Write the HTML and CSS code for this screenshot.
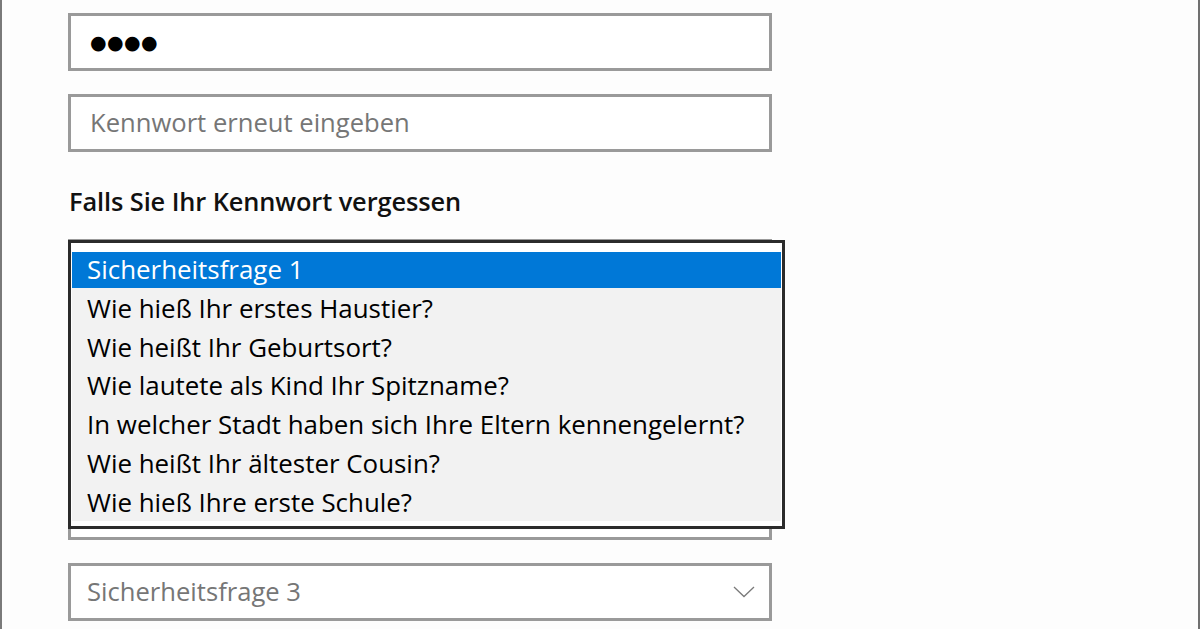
FILE: index.html
```html
<!DOCTYPE html>
<html lang="de">
<head>
<meta charset="utf-8">
<title>Kennwort</title>
<link rel="stylesheet" href="styles.css">
</head>
<body>
<div class="window">
  <div class="form">
    <div class="field"><span class="dots">●●●●</span></div>
    <div class="field gap"><span class="placeholder">Kennwort erneut eingeben</span></div>
    <div class="heading">Falls Sie Ihr Kennwort vergessen</div>
    <div class="field select first"></div>
    <div class="field gap"></div>
    <div class="field select gap"></div>
    <div class="field gap"></div>
    <div class="field select gap">
      <span class="placeholder">Sicherheitsfrage 3</span>
      <svg class="chevron" width="22" height="12" viewBox="0 0 22 12"><polyline points="1,1 11,10.5 21,1" fill="none" stroke="#7a7a7a" stroke-width="1.3"/></svg>
    </div>
    <div class="popup">
      <ul class="list">
        <li class="item selected">Sicherheitsfrage 1</li>
        <li class="item">Wie hieß Ihr erstes Haustier?</li>
        <li class="item">Wie heißt Ihr Geburtsort?</li>
        <li class="item">Wie lautete als Kind Ihr Spitzname?</li>
        <li class="item">In welcher Stadt haben sich Ihre Eltern kennengelernt?</li>
        <li class="item">Wie heißt Ihr ältester Cousin?</li>
        <li class="item">Wie hieß Ihre erste Schule?</li>
      </ul>
    </div>
  </div>
</div>
</body>
</html>
```
FILE: styles.css
```css
html, body {
  margin: 0;
  padding: 0;
  background: #fdfdfd;
}
.window {
  box-sizing: border-box;
  width: 1200px;
  height: 629px;
  overflow: hidden;
  border-left: 2px solid #7a7a7a;
  border-right: 2px solid #707070;
  font-family: "Open Sans", "Noto Sans", sans-serif;
}
.form {
  position: relative;
  width: 704px;
  margin-left: 66px;
  padding-top: 13px;
  display: flex;
  flex-direction: column;
}
.field {
  box-sizing: border-box;
  height: 58px;
  border: 3px solid #9a9a9a;
  background: #fff;
  display: flex;
  align-items: center;
  padding-left: 19px;
  padding-right: 14px;
}
.field.gap {
  margin-top: 23px;
}
.field.select {
  padding-left: 16px;
  justify-content: space-between;
}
.field.first {
  margin-top: 23px;
}
.dots {
  font-family: "DejaVu Sans", sans-serif;
  font-size: 19px;
  letter-spacing: 0.4px;
  color: #000;
  line-height: 1;
}
.placeholder {
  font-size: 25.6px;
  color: #767676;
  line-height: 1.2;
}
.chevron {
  display: block;
}
.heading {
  margin-top: 34px;
  font-size: 25.4px;
  font-weight: 600;
  color: #111;
  line-height: 30px;
  letter-spacing: -0.1px;
  padding-left: 1px;
}
.popup {
  position: absolute;
  left: 0;
  top: 240px;
  box-sizing: border-box;
  width: 717px;
  height: 289px;
  border: 3px solid #2b2b2b;
  background: #fff;
  padding: 9px 1px 5px 1px;
}
.list {
  list-style: none;
  margin: 0;
  padding: 0;
  background: #f2f2f2;
}
.item {
  box-sizing: border-box;
  height: 38.8px;
  display: flex;
  align-items: center;
  padding-left: 15px;
  padding-top: 2px;
  font-size: 25.9px;
  line-height: 1.2;
  color: #000;
  white-space: nowrap;
}
.item.selected {
  height: 36px;
  padding-top: 0;
  background: #0078d7;
  color: #fff;
}
```
